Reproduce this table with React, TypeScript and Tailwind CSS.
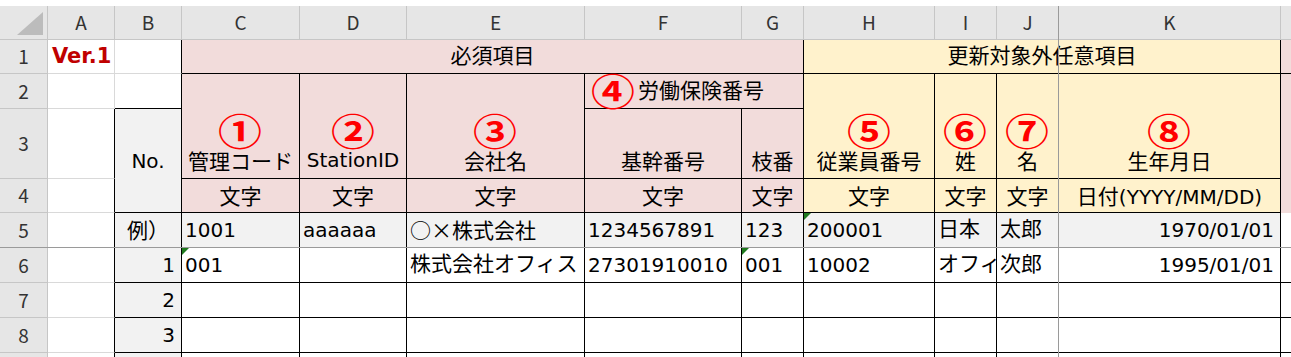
import React from "react";

const HD =
  "bg-[#e6e6e6] border-r border-b border-[#c6c6c6] flex items-center justify-center text-[#333] font-['Noto_Sans_CJK_JP',sans-serif] text-[19px]";
const PK = "bg-[#f2dcdb]";
const YL = "bg-[#fff2cc]";
const GR = "bg-[#f2f2f2]";
const TB = "border-r border-b border-black";
const HEAD2 =
  "border-r border-b border-black flex flex-col items-center justify-end pb-[3px] font-['Noto_Sans_CJK_JP',sans-serif] text-[21px] whitespace-nowrap";
const SUB =
  "border-r border-b border-black flex items-center justify-center font-['Noto_Sans_CJK_JP',sans-serif] text-[21px] whitespace-nowrap overflow-hidden";
const DL = "border-r border-b border-black flex items-center pl-[3px] whitespace-nowrap overflow-hidden relative";
const DR = "border-r border-b border-black flex items-center justify-end pr-[6px] whitespace-nowrap overflow-hidden";
const ACOL = "border-r border-r-black border-b border-b-[#d9d9d9]";

function Circ({ children }: { children: React.ReactNode }) {
  return (
    <span className="inline-block h-[30px] leading-[30px] text-[#ff0000] font-bold font-['Noto_Sans_CJK_JP',sans-serif] text-[36px] scale-x-[1.22] scale-y-[1.03]">
      {children}
    </span>
  );
}

function Tri() {
  return (
    <span className="absolute left-0 top-0 w-0 h-0 border-t-[7px] border-t-[#1f7a1f] border-r-[7px] border-r-transparent" />
  );
}

export default function App() {
  return (
    <div className="relative w-[1291px] h-[357px] overflow-hidden bg-white pt-[6px] font-['DejaVu_Sans','Noto_Sans_CJK_JP',sans-serif] text-[20px] text-black">
      <div className="grid grid-cols-[48px_67px_67px_118px_107px_178px_157px_62px_131px_62px_62px_222px_60px] grid-rows-[34px_34px_35px_70px_34px_35px_35px_35px_35px_35px]">
        {/* column headers */}
        <div className="col-start-1 row-start-1 relative bg-[#e6e6e6] border-r border-b border-[#c6c6c6]">
          <svg className="absolute left-0 top-0" width="48" height="34" viewBox="0 0 48 34">
            <polygon points="43,6 43,29 17,29" fill="#bcbcbc" />
          </svg>
        </div>
        <div className={`col-start-2 row-start-1 ${HD}`}>A</div>
        <div className={`col-start-3 row-start-1 ${HD}`}>B</div>
        <div className={`col-start-4 row-start-1 ${HD}`}>C</div>
        <div className={`col-start-5 row-start-1 ${HD}`}>D</div>
        <div className={`col-start-6 row-start-1 ${HD}`}>E</div>
        <div className={`col-start-7 row-start-1 ${HD}`}>F</div>
        <div className={`col-start-8 row-start-1 ${HD}`}>G</div>
        <div className={`col-start-9 row-start-1 ${HD}`}>H</div>
        <div className={`col-start-10 row-start-1 ${HD}`}>I</div>
        <div className={`col-start-11 row-start-1 ${HD}`}>J</div>
        <div className={`col-start-12 row-start-1 ${HD}`}>K</div>
        <div className={`col-start-13 row-start-1 ${HD}`} />

        {/* row headers */}
        <div className={`col-start-1 row-start-2 ${HD}`}>1</div>
        <div className={`col-start-1 row-start-3 ${HD}`}>2</div>
        <div className={`col-start-1 row-start-4 ${HD}`}>3</div>
        <div className={`col-start-1 row-start-5 ${HD}`}>4</div>
        <div className={`col-start-1 row-start-6 ${HD}`}>5</div>
        <div className={`col-start-1 row-start-7 ${HD}`}>6</div>
        <div className={`col-start-1 row-start-8 ${HD}`}>7</div>
        <div className={`col-start-1 row-start-9 ${HD}`}>8</div>
        <div className={`col-start-1 row-start-10 ${HD}`} />

        {/* Excel row 1 */}
        <div className="col-start-2 row-start-2 border-r border-b border-[#d9d9d9] flex items-center pl-[4px] font-bold text-[#c00000] text-[21px]">
          Ver.1
        </div>
        <div className="col-start-3 row-start-2 border-r border-r-black border-b border-b-[#d9d9d9]" />
        <div className={`col-start-4 col-span-5 row-start-2 ${PK} ${TB} flex items-center justify-center pb-[4px] font-['Noto_Sans_CJK_JP',sans-serif] text-[21px]`}>
          必須項目
        </div>
        <div className={`col-start-9 col-span-4 row-start-2 ${YL} ${TB} flex items-center justify-center pb-[4px] font-['Noto_Sans_CJK_JP',sans-serif] text-[21px]`}>
          更新対象外任意項目
        </div>
        <div className={`col-start-13 row-start-2 ${PK} border-b border-black`} />

        {/* Excel row 2 */}
        <div className="col-start-2 row-start-3 border-r border-b border-[#d9d9d9]" />
        <div className={`col-start-3 row-start-3 ${TB}`} />
        <div className={`col-start-4 row-start-3 row-span-2 ${PK} ${HEAD2}`}>
          <Circ>①</Circ>
          <span className="leading-[30px]">管理コード</span>
        </div>
        <div className={`col-start-5 row-start-3 row-span-2 ${PK} ${HEAD2}`}>
          <Circ>②</Circ>
          <span className="leading-[30px] font-['DejaVu_Sans',sans-serif] text-[20px]">StationID</span>
        </div>
        <div className={`col-start-6 row-start-3 row-span-2 ${PK} ${HEAD2}`}>
          <Circ>③</Circ>
          <span className="leading-[30px]">会社名</span>
        </div>
        <div className={`col-start-7 col-span-2 row-start-3 ${PK} ${TB} flex items-center pl-[10px] pb-[2px] font-['Noto_Sans_CJK_JP',sans-serif] text-[21px] whitespace-nowrap`}>
          <Circ>④</Circ>
          <span className="ml-[7px]">労働保険番号</span>
        </div>
        <div className={`col-start-9 row-start-3 row-span-2 ${YL} ${HEAD2}`}>
          <Circ>⑤</Circ>
          <span className="leading-[30px]">従業員番号</span>
        </div>
        <div className={`col-start-10 row-start-3 row-span-2 ${YL} ${HEAD2}`}>
          <Circ>⑥</Circ>
          <span className="leading-[30px]">姓</span>
        </div>
        <div className={`col-start-11 row-start-3 row-span-2 ${YL} ${HEAD2}`}>
          <Circ>⑦</Circ>
          <span className="leading-[30px]">名</span>
        </div>
        <div className={`col-start-12 row-start-3 row-span-2 ${YL} ${HEAD2}`}>
          <Circ>⑧</Circ>
          <span className="leading-[30px]">生年月日</span>
        </div>
        <div className={`col-start-13 row-start-3 ${PK}`} />

        {/* Excel row 3 */}
        <div className={`col-start-2 row-start-4 ${ACOL}`} />
        <div className={`col-start-3 row-start-4 row-span-2 ${GR} ${TB} flex items-center justify-center`}>
          No.
        </div>
        <div className={`col-start-7 row-start-4 ${PK} ${HEAD2}`}>
          <span className="leading-[30px]">基幹番号</span>
        </div>
        <div className={`col-start-8 row-start-4 ${PK} ${HEAD2}`}>
          <span className="leading-[30px]">枝番</span>
        </div>
        <div className={`col-start-13 row-start-4 ${PK}`} />

        {/* Excel row 4 */}
        <div className={`col-start-2 row-start-5 ${ACOL}`} />
        <div className={`col-start-4 row-start-5 ${PK} ${SUB}`}>文字</div>
        <div className={`col-start-5 row-start-5 ${PK} ${SUB}`}>文字</div>
        <div className={`col-start-6 row-start-5 ${PK} ${SUB}`}>文字</div>
        <div className={`col-start-7 row-start-5 ${PK} ${SUB}`}>文字</div>
        <div className={`col-start-8 row-start-5 ${PK} ${SUB}`}>文字</div>
        <div className={`col-start-9 row-start-5 ${YL} ${SUB}`}>文字</div>
        <div className={`col-start-10 row-start-5 ${YL} ${SUB}`}>文字</div>
        <div className={`col-start-11 row-start-5 ${YL} ${SUB}`}>文字</div>
        <div className={`col-start-12 row-start-5 ${YL} ${SUB}`}>
          <span>
            日付<span className="font-['DejaVu_Sans',sans-serif] text-[20px]">(YYYY/MM/DD)</span>
          </span>
        </div>
        <div className={`col-start-13 row-start-5 ${PK}`} />

        {/* Excel row 5 */}
        <div className={`col-start-2 row-start-6 ${ACOL}`} />
        <div className={`col-start-3 row-start-6 ${GR} ${TB} flex items-center justify-center font-['Noto_Sans_CJK_JP',sans-serif] text-[21px]`}>
          例）
        </div>
        <div className={`col-start-4 row-start-6 ${GR} ${DL}`}>1001</div>
        <div className={`col-start-5 row-start-6 ${GR} ${DL}`}>aaaaaa</div>
        <div className={`col-start-6 row-start-6 ${GR} ${DL} font-['Noto_Sans_CJK_JP',sans-serif] text-[21px]`}>○×株式会社</div>
        <div className={`col-start-7 row-start-6 ${GR} ${DL}`}>1234567891</div>
        <div className={`col-start-8 row-start-6 ${GR} ${DL}`}>123</div>
        <div className={`col-start-9 row-start-6 ${GR} ${DL}`}>
          <Tri />
          200001
        </div>
        <div className={`col-start-10 row-start-6 ${GR} ${DL} text-[21px]`}>日本</div>
        <div className={`col-start-11 row-start-6 ${GR} ${DL} text-[21px]`}>太郎</div>
        <div className={`col-start-12 row-start-6 ${GR} ${DR}`}>1970/01/01</div>
        <div className="col-start-13 row-start-6 border-b border-black" />

        {/* Excel row 6 */}
        <div className={`col-start-2 row-start-7 ${ACOL}`} />
        <div className={`col-start-3 row-start-7 ${GR} ${DR}`}>1</div>
        <div className={`col-start-4 row-start-7 ${DL}`}>
          <Tri />
          001
        </div>
        <div className={`col-start-5 row-start-7 ${DL}`} />
        <div className={`col-start-6 row-start-7 ${DL} text-[21px]`}>株式会社オフィス</div>
        <div className={`col-start-7 row-start-7 ${DL}`}>27301910010</div>
        <div className={`col-start-8 row-start-7 ${DL}`}>
          <Tri />
          001
        </div>
        <div className={`col-start-9 row-start-7 ${DL}`}>10002</div>
        <div className={`col-start-10 row-start-7 ${DL} text-[21px]`}>オフィ</div>
        <div className={`col-start-11 row-start-7 ${DL} text-[21px]`}>次郎</div>
        <div className={`col-start-12 row-start-7 ${DR}`}>1995/01/01</div>
        <div className="col-start-13 row-start-7 border-b border-black" />

        {/* Excel row 7 */}
        <div className={`col-start-2 row-start-8 ${ACOL}`} />
        <div className={`col-start-3 row-start-8 ${GR} ${DR}`}>2</div>
        <div className={`col-start-4 row-start-8 ${DL}`} />
        <div className={`col-start-5 row-start-8 ${DL}`} />
        <div className={`col-start-6 row-start-8 ${DL}`} />
        <div className={`col-start-7 row-start-8 ${DL}`} />
        <div className={`col-start-8 row-start-8 ${DL}`} />
        <div className={`col-start-9 row-start-8 ${DL}`} />
        <div className={`col-start-10 row-start-8 ${DL}`} />
        <div className={`col-start-11 row-start-8 ${DL}`} />
        <div className={`col-start-12 row-start-8 ${DL}`} />
        <div className="col-start-13 row-start-8 border-b border-black" />

        {/* Excel row 8 */}
        <div className={`col-start-2 row-start-9 ${ACOL}`} />
        <div className={`col-start-3 row-start-9 ${GR} ${DR}`}>3</div>
        <div className={`col-start-4 row-start-9 ${DL}`} />
        <div className={`col-start-5 row-start-9 ${DL}`} />
        <div className={`col-start-6 row-start-9 ${DL}`} />
        <div className={`col-start-7 row-start-9 ${DL}`} />
        <div className={`col-start-8 row-start-9 ${DL}`} />
        <div className={`col-start-9 row-start-9 ${DL}`} />
        <div className={`col-start-10 row-start-9 ${DL}`} />
        <div className={`col-start-11 row-start-9 ${DL}`} />
        <div className={`col-start-12 row-start-9 ${DL}`} />
        <div className="col-start-13 row-start-9 border-b border-black" />

        {/* Excel row 9 */}
        <div className={`col-start-2 row-start-10 ${ACOL}`} />
        <div className={`col-start-3 row-start-10 ${GR} ${DR}`} />
        <div className={`col-start-4 row-start-10 ${DL}`} />
        <div className={`col-start-5 row-start-10 ${DL}`} />
        <div className={`col-start-6 row-start-10 ${DL}`} />
        <div className={`col-start-7 row-start-10 ${DL}`} />
        <div className={`col-start-8 row-start-10 ${DL}`} />
        <div className={`col-start-9 row-start-10 ${DL}`} />
        <div className={`col-start-10 row-start-10 ${DL}`} />
        <div className={`col-start-11 row-start-10 ${DL}`} />
        <div className={`col-start-12 row-start-10 ${DL}`} />
        <div className="col-start-13 row-start-10 border-b border-black" />
      </div>

      {/* freeze pane lines */}
      <div className="absolute left-[1058px] top-[6px] bottom-0 w-px bg-[#9a9a9a]" />
      <div className="absolute top-[247px] left-0 right-0 h-px bg-[#9a9a9a]" />
    </div>
  );
}
